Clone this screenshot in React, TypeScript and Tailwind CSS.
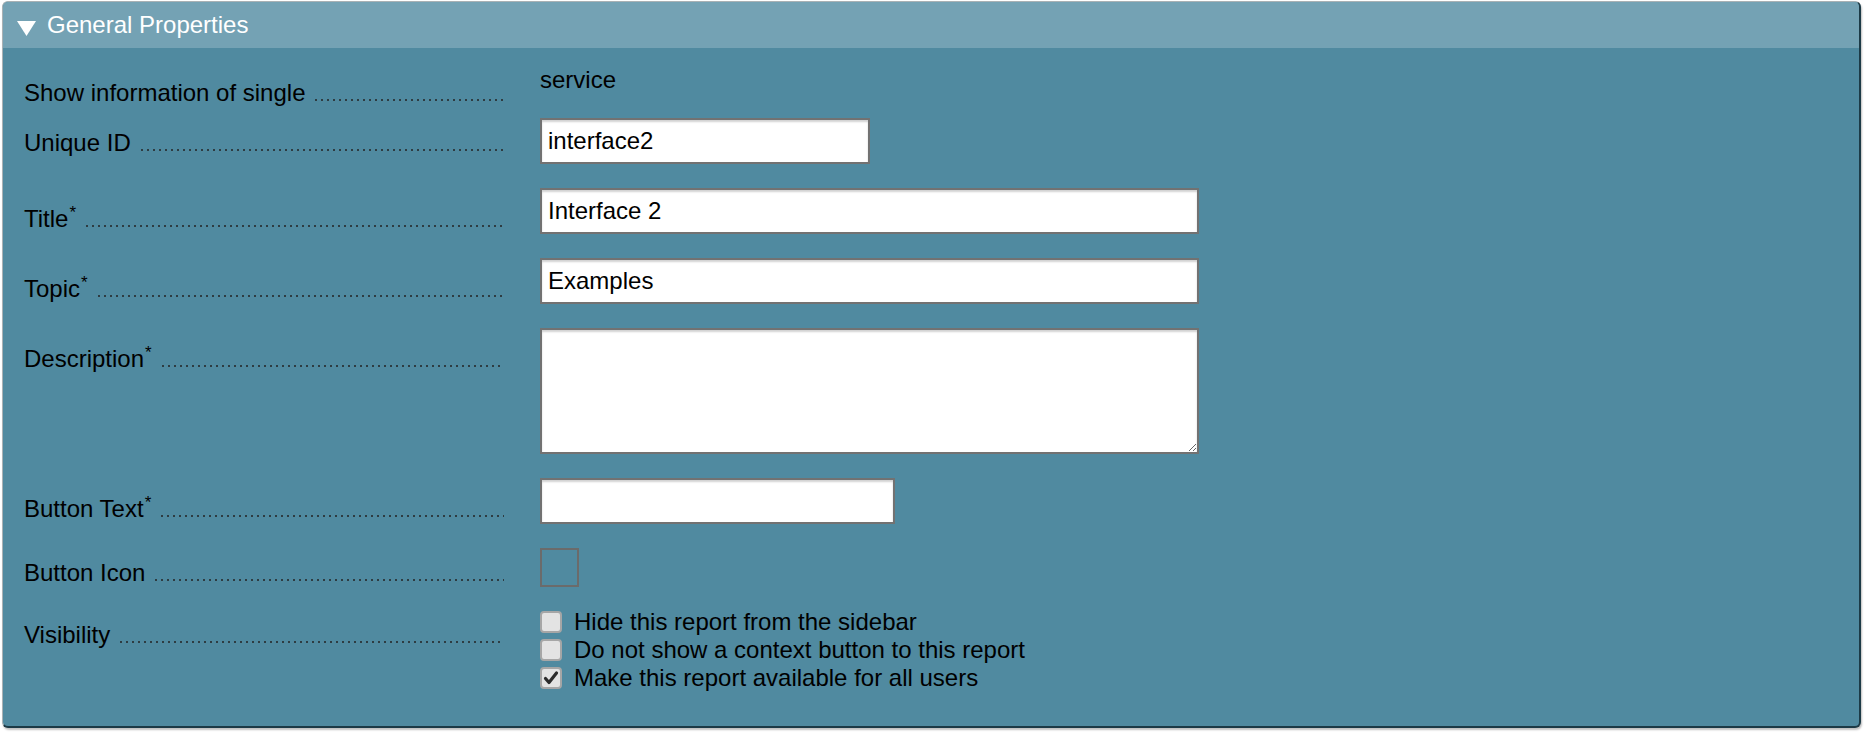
import type { ReactNode } from "react";

const dots =
  "flex-1 ml-[10px] mt-[20px] h-[2px] bg-[repeating-linear-gradient(90deg,#2e3c42_0_2px,transparent_2px_6px)]";

const inputCls =
  "h-[46px] border-2 border-[#727272] bg-white px-[6px] text-[24px] text-black shadow-[inset_0_2px_2px_rgba(0,0,0,0.18)] outline-none font-['Liberation_Sans',Arial,sans-serif]";

function Label({ text, req, pt }: { text: string; req?: boolean; pt: string }) {
  return (
    <div className={`flex items-start ${pt}`}>
      <span className="leading-[28px] whitespace-nowrap">
        {text}
        {req ? <span className="relative -top-[9px] ml-[1px] text-[17px] leading-none">*</span> : null}
      </span>
      <span className={dots} />
    </div>
  );
}

function Row({ label, mt, children }: { label: ReactNode; mt: string; children: ReactNode }) {
  return (
    <div className={`grid grid-cols-[480px_1fr] gap-x-[36px] items-start ${mt}`}>
      {label}
      <div>{children}</div>
    </div>
  );
}

function Check({ checked, text }: { checked?: boolean; text: string }) {
  return (
    <div className="flex h-[28px] items-center">
      <span className="flex h-[22px] w-[22px] items-center justify-center rounded-[4px] border-2 border-[#a6a6a6] bg-[#e3e3e3]">
        {checked ? (
          <svg width="16" height="16" viewBox="0 0 16 16">
            <path d="M2.5 8.5 L6 12.5 L13.5 3" fill="none" stroke="#2b2b2b" strokeWidth="3.2" strokeLinecap="round" strokeLinejoin="round" />
          </svg>
        ) : null}
      </span>
      <span className="ml-[12px] leading-[28px]">{text}</span>
    </div>
  );
}

export default function App() {
  return (
    <div className="min-h-screen bg-white pt-[1px] font-['Liberation_Sans',Arial,sans-serif] text-[24px] text-black">
      <div className="ml-[2px] w-[1859px] overflow-hidden rounded-[6px] border-t border-l border-r-2 border-b-2 border-t-[#a9b1b4] border-l-[#a9b1b4] border-r-[#1c3a46] border-b-[#1c3a46] bg-[#508aa0] shadow-[1px_2px_2px_rgba(0,0,0,0.25)]">
        <div className="flex h-[46px] items-center bg-[#74a2b4] pl-[14px]">
          <svg width="19" height="15" viewBox="0 0 19 15" className="mt-[7px]">
            <polygon points="0,0 19,0 9.5,15" fill="#ffffff" />
          </svg>
          <span className="ml-[11px] text-white">General Properties</span>
        </div>

        <div className="flex flex-col pl-[21px] pt-[18px] pb-[34px]">
          <Row mt="" label={<Label text="Show information of single" pt="pt-[13px]" />}>
            <div className="leading-[28px]">service</div>
          </Row>

          <Row mt="mt-[11px]" label={<Label text="Unique ID" pt="pt-[11px]" />}>
            <input className={`${inputCls} w-[330px]`} defaultValue="interface2" />
          </Row>

          <Row mt="mt-[24px]" label={<Label text="Title" req pt="pt-[17px]" />}>
            <input className={`${inputCls} w-[659px]`} defaultValue="Interface 2" />
          </Row>

          <Row mt="mt-[24px]" label={<Label text="Topic" req pt="pt-[17px]" />}>
            <input className={`${inputCls} w-[659px]`} defaultValue="Examples" />
          </Row>

          <Row mt="mt-[24px]" label={<Label text="Description" req pt="pt-[17px]" />}>
            <textarea className={`${inputCls} block h-[126px] w-[659px] resize`} />
          </Row>

          <Row mt="mt-[24px]" label={<Label text="Button Text" req pt="pt-[17px]" />}>
            <input className={`${inputCls} w-[355px]`} defaultValue="" />
          </Row>

          <Row mt="mt-[24px]" label={<Label text="Button Icon" pt="pt-[11px]" />}>
            <div className="h-[39px] w-[39px] border-2 border-[#6b6b6b]" />
          </Row>

          <Row mt="mt-[21px]" label={<Label text="Visibility" pt="pt-[13px]" />}>
            <Check text="Hide this report from the sidebar" />
            <Check text="Do not show a context button to this report" />
            <Check checked text="Make this report available for all users" />
          </Row>
        </div>
      </div>
    </div>
  );
}
